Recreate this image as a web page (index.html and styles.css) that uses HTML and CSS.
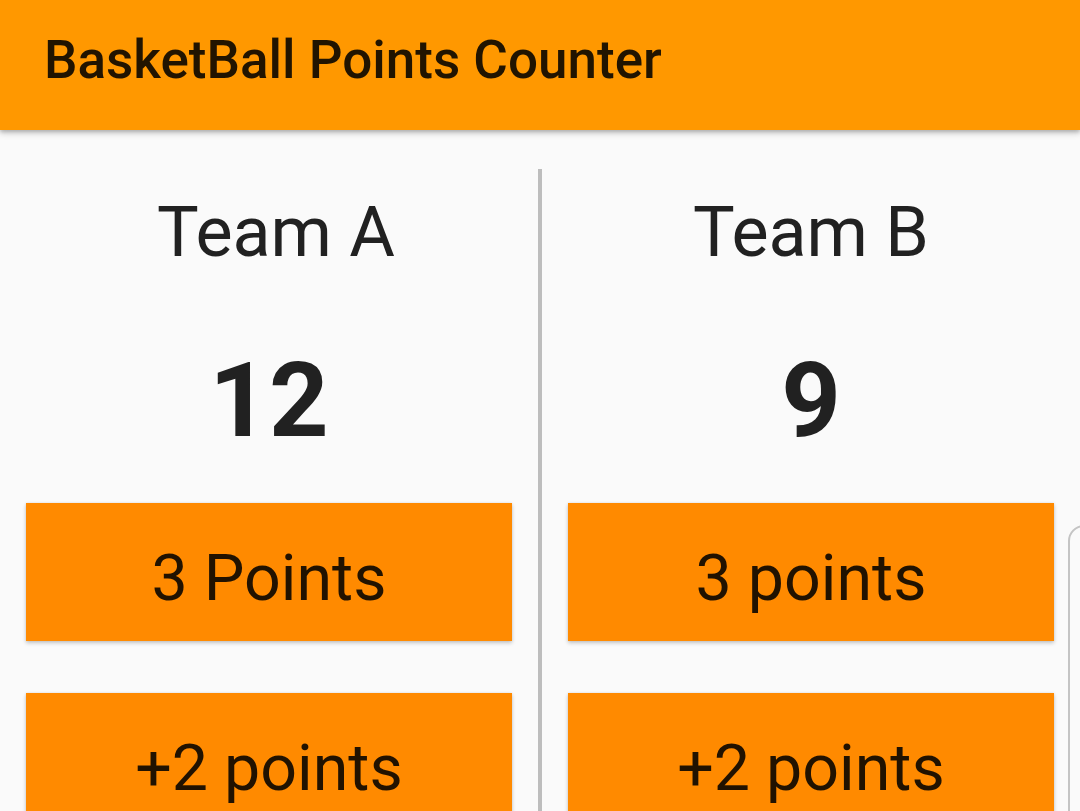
FILE: index.html
```html
<!DOCTYPE html>
<html>
<head>
<meta charset="utf-8">
<link rel="stylesheet" href="styles.css">
</head>
<body>
<header class="appbar"><h1 class="title">BasketBall Points Counter</h1></header>
<main class="board">
  <section class="team">
    <div class="team-name team-name--a">Team A</div>
    <div class="score">12</div>
    <button class="btn">3 Points</button>
    <button class="btn">+2 points</button>
  </section>
  <div class="divider"></div>
  <section class="team">
    <div class="team-name">Team B</div>
    <div class="score">9</div>
    <button class="btn">3 points</button>
    <button class="btn">+2 points</button>
  </section>
</main>
<div class="edge-handle"></div>
</body>
</html>
```
FILE: styles.css
```css
html, body {
  margin: 0;
  padding: 0;
  width: 1080px;
  height: 811px;
  overflow: hidden;
  background: #fafafa;
  font-family: Roboto, "Noto Sans", sans-serif;
}
.appbar {
  position: relative;
  z-index: 2;
  height: 130px;
  box-sizing: border-box;
  background: #ff9800;
  padding-left: 44px;
  box-shadow: 0 3px 6px rgba(0,0,0,0.22), 0 2px 3px rgba(0,0,0,0.12);
}
.title {
  margin: 0;
  padding-top: 29px;
  font-size: 53px;
  line-height: 62px;
  font-weight: 500;
  color: rgba(0,0,0,0.87);
  letter-spacing: 0;
}
.board {
  display: flex;
  height: 681px;
  padding-top: 39px;
  box-sizing: border-box;
  overflow: hidden;
}
.team {
  flex: 1;
  display: flex;
  flex-direction: column;
  align-items: stretch;
  padding: 0 26px;
}
.divider {
  width: 4px;
  background: #bdbdbd;
  align-self: stretch;
}
.team-name {
  margin-top: 22px;
  font-size: 70px;
  line-height: 82px;
  text-align: center;
  color: #212121;
}
.team-name--a {
  padding-left: 14px;
}
.score {
  margin-top: 76px;
  font-size: 104px;
  line-height: 104px;
  font-weight: 700;
  text-align: center;
  color: #212121;
}
.btn {
  margin-top: 50px;
  height: 138px;
  flex: none;
  box-sizing: border-box;
  padding: 11px 0 0;
  border: none;
  background: #ff8a00;
  font-family: Roboto, "Noto Sans", sans-serif;
  font-size: 64.5px;
  line-height: 120px;
  color: rgba(0,0,0,0.87);
  box-shadow: 0 2px 4px rgba(0,0,0,0.22), 0 0 2px rgba(0,0,0,0.08);
}
.btn + .btn {
  margin-top: 52px;
}
.edge-handle {
  position: absolute;
  left: 1068px;
  top: 525px;
  width: 60px;
  height: 400px;
  border: 2px solid #c4c4c4;
  border-radius: 16px;
}
```
